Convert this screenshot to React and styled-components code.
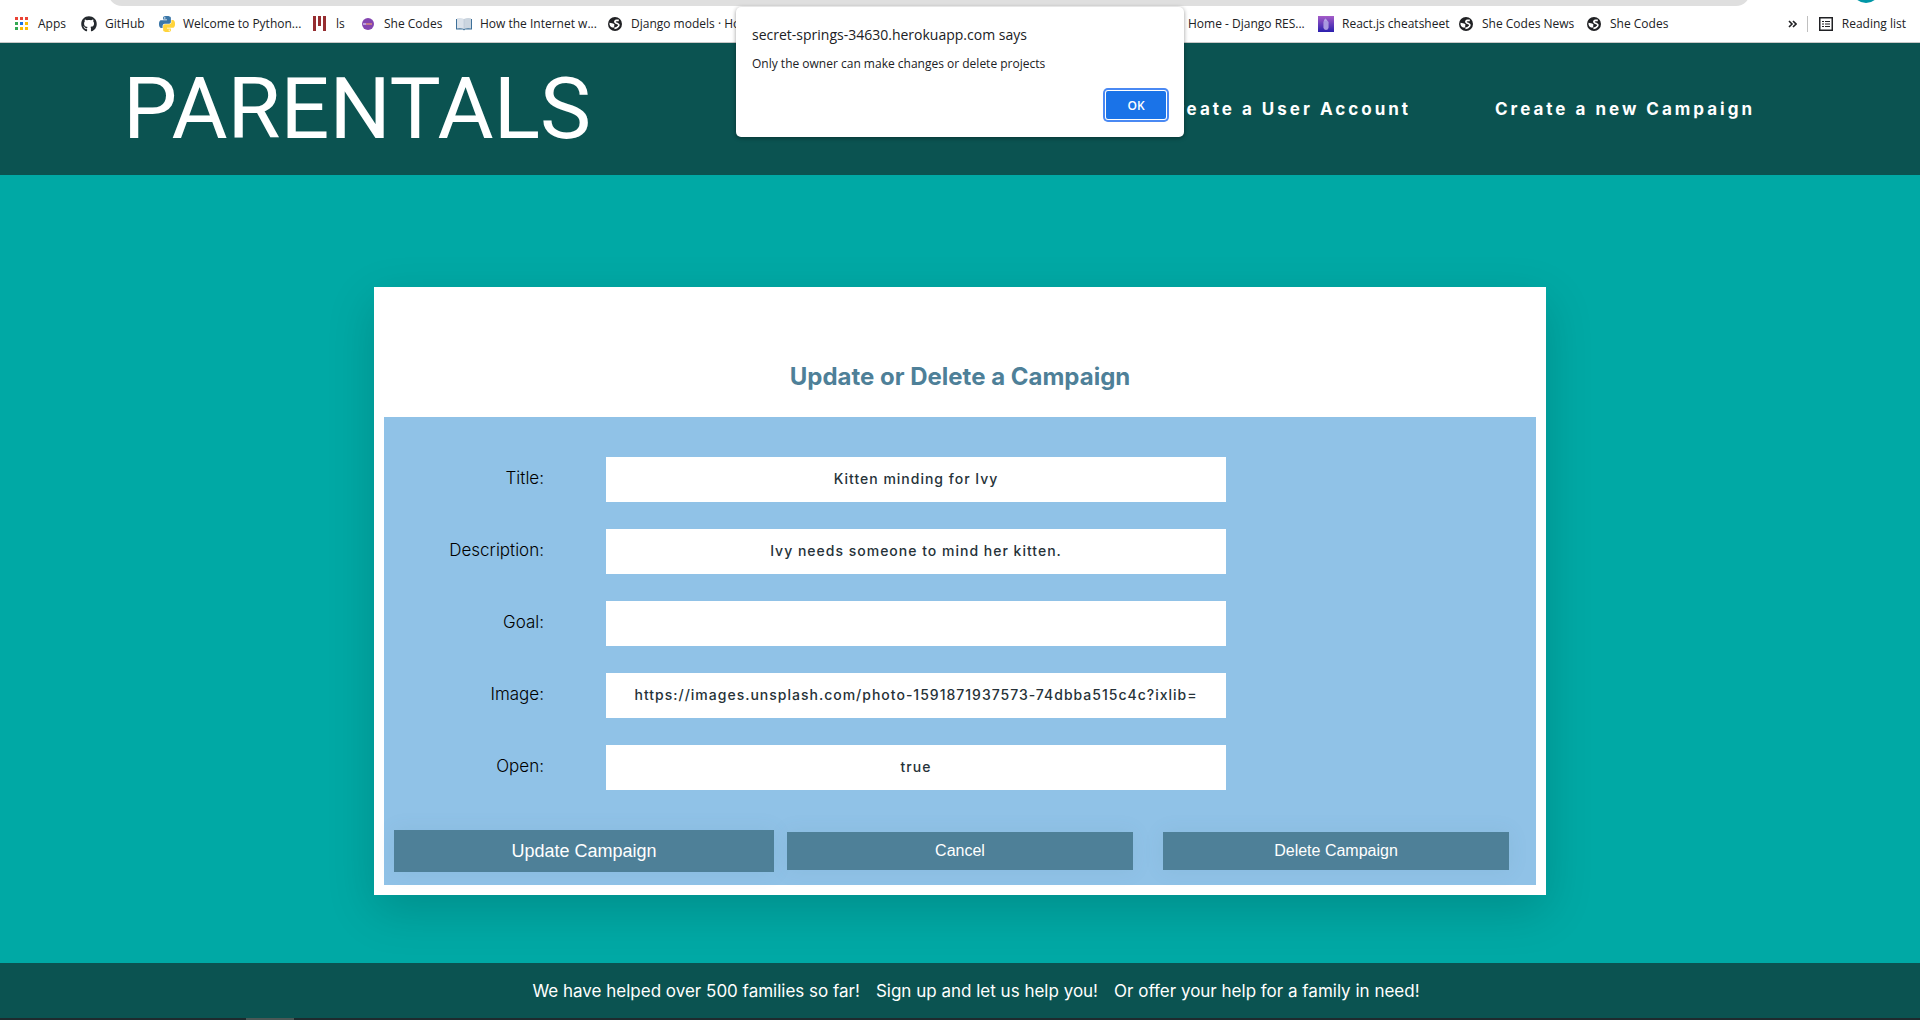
import React from "react";
import styled, { createGlobalStyle } from "styled-components";
import { FaGithub } from "react-icons/fa";

const uiFont = '"Open Sans", "Noto Sans", sans-serif';
const brandFont = 'Inter, "Open Sans", sans-serif';

const GlobalStyle = createGlobalStyle`
  *, *::before, *::after { box-sizing: border-box; }
  body { margin: 0; background: #00a9a5; font-family: ${brandFont}; font-size: 17px; }
`;

const Page = styled.div`
  position: relative;
  display: flex;
  flex-direction: column;
  min-height: 100vh;
`;

/* Browser chrome */
const AddressStrip = styled.div`
  display: flex;
  justify-content: space-between;
  align-items: flex-end;
  height: 6px;
  padding: 0 40px 0 108px;
  background: #fff;
  overflow: hidden;
`;

const AddressBar = styled.div`
  flex: 1;
  height: 28px;
  margin-right: 102px;
  border-radius: 14px;
  background: #dfdfdf;
`;

const Avatar = styled.div`
  width: 28px;
  height: 28px;
  margin-bottom: 3px;
  border-radius: 50%;
  background: #0097a7;
`;

const BookmarkBar = styled.nav`
  display: flex;
  justify-content: space-between;
  align-items: center;
  height: 37px;
  padding: 0 14px;
  border-bottom: 1px solid #c8c8c8;
  background: #fff;
  font-family: ${uiFont};
  font-size: 12px;
  line-height: 16px;
`;

const BookmarkGroup = styled.div`
  display: flex;
  align-items: center;
  gap: ${(p) => p.$gap || 0}px;
`;

const Bookmark = styled.a`
  display: flex;
  align-items: center;
  gap: 8px;
  width: ${(p) => (p.$width ? `${p.$width}px` : "auto")};
  color: #202124;
  text-decoration: none;
  white-space: nowrap;

  svg { flex: none; width: 16px; height: 16px; }
`;

const MoreButton = styled.button`
  display: flex;
  padding: 0;
  border: 0;
  background: none;
`;

const Divider = styled.span`
  width: 1px;
  height: 16px;
  background: #c0c0c0;
`;

/* Site header */
const SiteHeader = styled.header`
  display: flex;
  justify-content: space-between;
  align-items: center;
  height: 132px;
  padding: 0 165px 0 123px;
  background: #0b5351;
  color: #fff;
`;

const Brand = styled.h1`
  margin: 0;
  font-family: Roboto, sans-serif;
  font-size: 86px;
  font-weight: 400;
  line-height: 104px;
`;

const SiteNav = styled.nav`
  display: flex;
  gap: 84px;
`;

const NavLink = styled.a`
  color: #fff;
  font-size: 17px;
  font-weight: 700;
  letter-spacing: 3px;
  text-decoration: none;
  white-space: nowrap;
`;

/* Campaign form */
const Main = styled.main`
  flex: 1;
  padding: 112px 24px 68px;
`;

const Card = styled.section`
  max-width: 1172px;
  margin: 0 auto;
  padding: 72px 10px 10px;
  background: #fff;
  box-shadow: 0 15px 45px rgba(0, 0, 0, 0.16);
`;

const CardTitle = styled.h2`
  margin: 0 0 22px;
  color: #4e8098;
  font-size: 24px;
  font-weight: 700;
  line-height: 36px;
  text-align: center;
`;

const Form = styled.form`
  padding: 40px 12px 15px;
  background: #90c2e7;
`;

const Fields = styled.div`
  display: flex;
  flex-direction: column;
  gap: 27px;
  margin-bottom: 42px;
`;

const Field = styled.div`
  display: grid;
  grid-template-columns: 148px minmax(0, 620px);
  column-gap: 62px;
  align-items: center;
`;

const Label = styled.label`
  padding-bottom: 3px;
  color: #000;
  font-size: 17px;
  font-weight: 300;
  text-align: right;
`;

const TextInput = styled.input`
  width: 100%;
  height: 45px;
  padding: 0 20px 2px;
  border: 0;
  outline: 0;
  background: #fff;
  color: #263238;
  font-family: ${brandFont};
  font-size: 14px;
  font-weight: 500;
  letter-spacing: 1px;
  text-align: center;
`;

const Actions = styled.div`
  display: grid;
  grid-template-columns: repeat(3, 1fr);
`;

const ActionButton = styled.button`
  height: ${(p) => (p.$raised ? 42 : 38)}px;
  margin: ${(p) => (p.$raised ? "-2px" : "0 15px")};
  padding: 0;
  border: 0;
  background: #4e8098;
  box-shadow: 0 0 20px rgba(78, 128, 152, 0.1);
  color: #fff;
  font-family: "Liberation Sans", Arial, sans-serif;
  font-size: ${(p) => (p.$raised ? 18 : 16)}px;
`;

/* Footer */
const SiteFooter = styled.footer`
  display: flex;
  justify-content: center;
  align-items: center;
  gap: 16px;
  height: 55px;
  padding-left: 32px;
  background: #0b5351;
  color: #fff;
`;

const FooterText = styled.p`
  margin: 0;
`;

const Taskbar = styled.div`
  height: 2px;
  padding-left: 246px;
  background: #1d2b2e;
`;

const TaskbarItem = styled.div`
  width: 48px;
  height: 2px;
  background: #4a5856;
`;

/* Alert */
const Alert = styled.div`
  position: absolute;
  top: 7px;
  left: 0;
  right: 0;
  display: flex;
  flex-direction: column;
  width: 448px;
  height: 130px;
  margin: 0 auto;
  padding: 16px;
  border-radius: 5px;
  background: #fff;
  box-shadow: 0 1px 4px rgba(0, 0, 0, 0.4);
  color: #202124;
  font-family: ${uiFont};
`;

const AlertTitle = styled.h2`
  margin: 0 0 8px;
  font-size: 14px;
  font-weight: 400;
  line-height: 24px;
`;

const AlertText = styled.p`
  margin: 0;
  font-size: 12px;
  line-height: 18px;
`;

const OkButton = styled.button`
  align-self: flex-end;
  width: 60px;
  height: 28px;
  margin: auto 2px 2px;
  padding: 0;
  border: 0;
  border-radius: 2px;
  background: #1a73e8;
  box-shadow: 0 0 0 1px #fff, 0 0 0 3px #4a89f3;
  color: #fff;
  font-family: ${uiFont};
  font-size: 12px;
  font-weight: 600;
`;

const AppsIcon = () => {
  const colors = ["#ea4335", "#ea4335", "#ea4335", "#34a853", "#1a73e8", "#fbbc04", "#34a853", "#fbbc04", "#fbbc04"];
  return (
    <svg viewBox="0 0 16 16" aria-hidden="true">
      {colors.map((c, i) => (
        <rect key={i} x={1 + (i % 3) * 5} y={1 + Math.floor(i / 3) * 5} width="3" height="3" fill={c} />
      ))}
    </svg>
  );
};

const PythonIcon = () => (
  <svg viewBox="0 0 24 24" aria-hidden="true">
    <path fill="#3b77a8" d="M14.25.18l.9.2.73.26.59.3.45.32.34.34.25.34.16.33.1.3.04.26.02.2-.01.13V8.5l-.05.63-.13.55-.21.46-.26.38-.3.31-.33.25-.35.19-.35.14-.33.1-.3.07-.26.04-.21.02H8.77l-.69.05-.59.14-.5.22-.41.27-.33.32-.27.35-.2.36-.15.37-.1.35-.07.32-.04.27-.02.21v3.06H3.17l-.21-.03-.28-.07-.32-.12-.35-.18-.36-.26-.36-.36-.35-.46-.32-.59-.28-.73-.21-.88-.14-1.05-.05-1.23.06-1.22.16-1.04.24-.87.32-.71.36-.57.4-.44.42-.33.42-.24.4-.16.36-.1.32-.05.24-.01h.16l.06.01h8.16v-.83H6.18l-.01-2.75-.02-.37.05-.34.11-.31.17-.28.25-.26.31-.23.38-.2.44-.18.51-.15.58-.12.64-.1.71-.06.77-.04.84-.02 1.27.05zm-6.3 1.98l-.23.33-.08.41.08.41.23.34.33.22.41.09.41-.09.33-.22.23-.34.08-.41-.08-.41-.23-.33-.33-.22-.41-.09-.41.09z" />
    <path fill="#ffd43b" d="M21.04 6.11l.28.06.32.12.35.18.36.27.36.35.35.47.32.59.28.73.21.88.14 1.04.05 1.23-.06 1.23-.16 1.04-.24.86-.32.71-.36.57-.4.45-.42.33-.42.24-.4.16-.36.09-.32.05-.24.02-.16-.01h-8.22v.82h5.84l.01 2.76.02.36-.05.34-.11.31-.17.29-.25.25-.31.24-.38.2-.44.17-.51.15-.58.13-.64.09-.71.07-.77.04-.84.01-1.27-.04-1.07-.14-.9-.2-.73-.25-.59-.3-.45-.33-.34-.34-.25-.34-.16-.33-.1-.3-.04-.25-.02-.2.01-.13v-5.34l.05-.64.13-.54.21-.46.26-.38.3-.32.33-.24.35-.2.35-.14.33-.1.3-.06.26-.04.21-.02.13-.01h5.84l.69-.05.59-.14.5-.21.41-.28.33-.32.27-.35.2-.36.15-.36.1-.35.07-.32.04-.28.02-.21V6.07h2.09l.14.01z" />
    <circle cx="15.4" cy="21.2" r="1" fill="#fff" />
  </svg>
);

const BarsIcon = () => (
  <svg viewBox="0 0 16 16" aria-hidden="true" fill="#962d30">
    <rect x="1" width="3" height="15" />
    <rect x="6" width="3" height="10" />
    <rect x="11" width="3" height="15" />
  </svg>
);

const OrbIcon = () => (
  <svg viewBox="0 0 16 16" aria-hidden="true">
    <circle cx="8" cy="8" r="6" fill="#8445b0" />
    <rect x="3" y="7" width="3" height="2" fill="#b99bdc" />
    <rect x="6" y="7" width="6" height="2" fill="#c27a8c" />
  </svg>
);

const BookIcon = () => (
  <svg viewBox="0 0 16 16" aria-hidden="true">
    <path d="M0 3h16v10.500H9l-1 1-1-1H0z" fill="#3d7099" />
    <path d="M1 2.300Q5 1.300 8 3v10Q5 11.700 1 12.500z" fill="#dbe2ea" />
    <path d="M15 2.300Q11 1.300 8 3v10q3-1.300 7-.500z" fill="#cbd5df" />
    <path d="M8 3v10" stroke="#afbecd" strokeWidth=".5" />
  </svg>
);

const GlobeIcon = () => (
  <svg viewBox="0 0 16 16" aria-hidden="true">
    <circle cx="8" cy="8" r="7" fill="#202124" />
    <path d="M11.800 4.300H9.600Q7.400 4.600 8 6.200 8.600 7.400 10.600 7.700 12.600 8.400 11.400 10.200 10 12 7.400 12.400" fill="none" stroke="#fff" strokeWidth="1.700" />
    <path d="M2.500 6.800l3.600.7q2 .6 1.200 1.800l-.2 2.300q-3.600.2-4.600-3.200z" fill="#fff" />
  </svg>
);

const ReactSheetIcon = () => (
  <svg viewBox="0 0 16 16" aria-hidden="true">
    <defs>
      <linearGradient id="sheet" x1="0" y1="0" x2="0" y2="1">
        <stop offset="0" stopColor="#a55cc8" />
        <stop offset="1" stopColor="#2a1fae" />
      </linearGradient>
    </defs>
    <rect width="16" height="16" fill="url(#sheet)" />
    <path d="M6.200 4q1.300-3 2.600 0l1.700 2v6l-1.200 1.800H6.800L5.500 12V6z" fill="#b6a4e4" />
    <path d="M7 5v8M9 5v8" stroke="#8f7cd6" strokeWidth=".6" />
  </svg>
);

const ListIcon = () => (
  <svg viewBox="0 0 16 16" aria-hidden="true">
    <rect x="1.750" y="1.750" width="12.500" height="12.500" fill="none" stroke="#202124" strokeWidth="1.500" />
    <path d="M4 5.500h2M4 8h2M4 10.500h2M7 5.500h5M7 8h5M7 10.500h5" stroke="#202124" strokeWidth="1.200" />
  </svg>
);

const ChevronsIcon = () => (
  <svg width="9" height="8" viewBox="0 0 9 8" aria-hidden="true" fill="none" stroke="#202124" strokeWidth="1.600">
    <path d="M1 1l3 3-3 3M5 1l3 3-3 3" />
  </svg>
);

const GithubIcon = () => <FaGithub color="#24292e" aria-hidden="true" />;

const bookmarks = [
  { label: "Apps", icon: AppsIcon, width: 67 },
  { label: "GitHub", icon: GithubIcon, width: 78 },
  { label: "Welcome to Python...", icon: PythonIcon, width: 153 },
  { label: "ls", icon: BarsIcon, width: 48 },
  { label: "She Codes", icon: OrbIcon, width: 96 },
  { label: "How the Internet w...", icon: BookIcon, width: 151 },
  { label: "Django models · How...", icon: GlobeIcon, width: 557 },
  { label: "Home - Django RES...", icon: GlobeIcon, width: 154 },
  { label: "React.js cheatsheet", icon: ReactSheetIcon, width: 140 },
  { label: "She Codes News", icon: GlobeIcon, width: 128 },
  { label: "She Codes", icon: GlobeIcon, width: 80 },
];

const fields = [
  { id: "title", label: "Title:", value: "Kitten minding for Ivy" },
  { id: "description", label: "Description:", value: "Ivy needs someone to mind her kitten." },
  { id: "goal", label: "Goal:", value: "" },
  { id: "image", label: "Image:", value: "https://images.unsplash.com/photo-1591871937573-74dbba515c4c?ixlib=" },
  { id: "open", label: "Open:", value: "true" },
];

export default function App() {
  return (
    <Page>
      <GlobalStyle />
      <AddressStrip>
        <AddressBar />
        <Avatar />
      </AddressStrip>
      <BookmarkBar aria-label="Bookmarks">
        <BookmarkGroup>
          {bookmarks.map(({ label, icon: Icon, width }, i) => (
            <Bookmark key={i} href="#" $width={width}>
              <Icon />
              {label}
            </Bookmark>
          ))}
        </BookmarkGroup>
        <BookmarkGroup $gap={10}>
          <MoreButton type="button" aria-label="More bookmarks">
            <ChevronsIcon />
          </MoreButton>
          <Divider />
          <Bookmark href="#">
            <ListIcon />
            Reading list
          </Bookmark>
        </BookmarkGroup>
      </BookmarkBar>

      <SiteHeader>
        <Brand>PARENTALS</Brand>
        <SiteNav>
          <NavLink href="#">Create a User Account</NavLink>
          <NavLink href="#">Create a new Campaign</NavLink>
        </SiteNav>
      </SiteHeader>

      <Main>
        <Card>
          <CardTitle>Update or Delete a Campaign</CardTitle>
          <Form onSubmit={(e) => e.preventDefault()}>
            <Fields>
              {fields.map((f) => (
                <Field key={f.id}>
                  <Label htmlFor={f.id}>{f.label}</Label>
                  <TextInput id={f.id} type="text" defaultValue={f.value} />
                </Field>
              ))}
            </Fields>
            <Actions>
              <ActionButton type="submit" $raised>Update Campaign</ActionButton>
              <ActionButton type="button">Cancel</ActionButton>
              <ActionButton type="button">Delete Campaign</ActionButton>
            </Actions>
          </Form>
        </Card>
      </Main>

      <SiteFooter>
        <FooterText>We have helped over 500 families so far!</FooterText>
        <FooterText>Sign up and let us help you!</FooterText>
        <FooterText>Or offer your help for a family in need!</FooterText>
      </SiteFooter>
      <Taskbar>
        <TaskbarItem />
      </Taskbar>

      <Alert role="alertdialog" aria-labelledby="alert-title" aria-describedby="alert-text">
        <AlertTitle id="alert-title">secret-springs-34630.herokuapp.com says</AlertTitle>
        <AlertText id="alert-text">Only the owner can make changes or delete projects</AlertText>
        <OkButton type="button">OK</OkButton>
      </Alert>
    </Page>
  );
}
